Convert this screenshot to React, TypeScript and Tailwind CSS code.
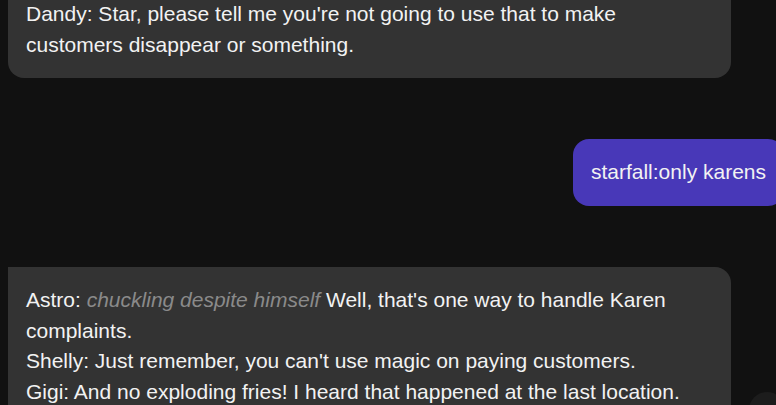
export default function App() {
  return (
    <div
      className="relative h-[405px] w-[776px] overflow-hidden bg-[#111111] text-[21px] leading-[30.67px] text-[#f2f2f2]"
      style={{ fontFamily: '"Liberation Sans", Arial, sans-serif' }}
    >
      <div className="-mt-[19px] flex flex-col gap-[61px] px-2">
        <div className="w-[723px] rounded-2xl bg-[#333333] p-[18px]">
          Dandy: Star, please tell me you're not going to use that to make customers disappear or
          something.
        </div>

        <div className="-mr-4 self-end rounded-2xl bg-[#4838b8] p-[18px]">starfall:only karens</div>

        <div className="w-[723px] rounded-2xl rounded-tl-none bg-[#333333] p-[18px]">
          <p>
            Astro: <em className="text-[#8a8a8a]">chuckling despite himself</em> Well, that's one
            way to handle Karen complaints.
          </p>
          <p>Shelly: Just remember, you can't use magic on paying customers.</p>
          <p>Gigi: And no exploding fries! I heard that happened at the last location.</p>
          <p>&nbsp;</p>
        </div>
      </div>

      <button className="absolute left-[749px] top-[392px] h-9 w-9 rounded-full bg-[#1c1c1c]" />
    </div>
  );
}
